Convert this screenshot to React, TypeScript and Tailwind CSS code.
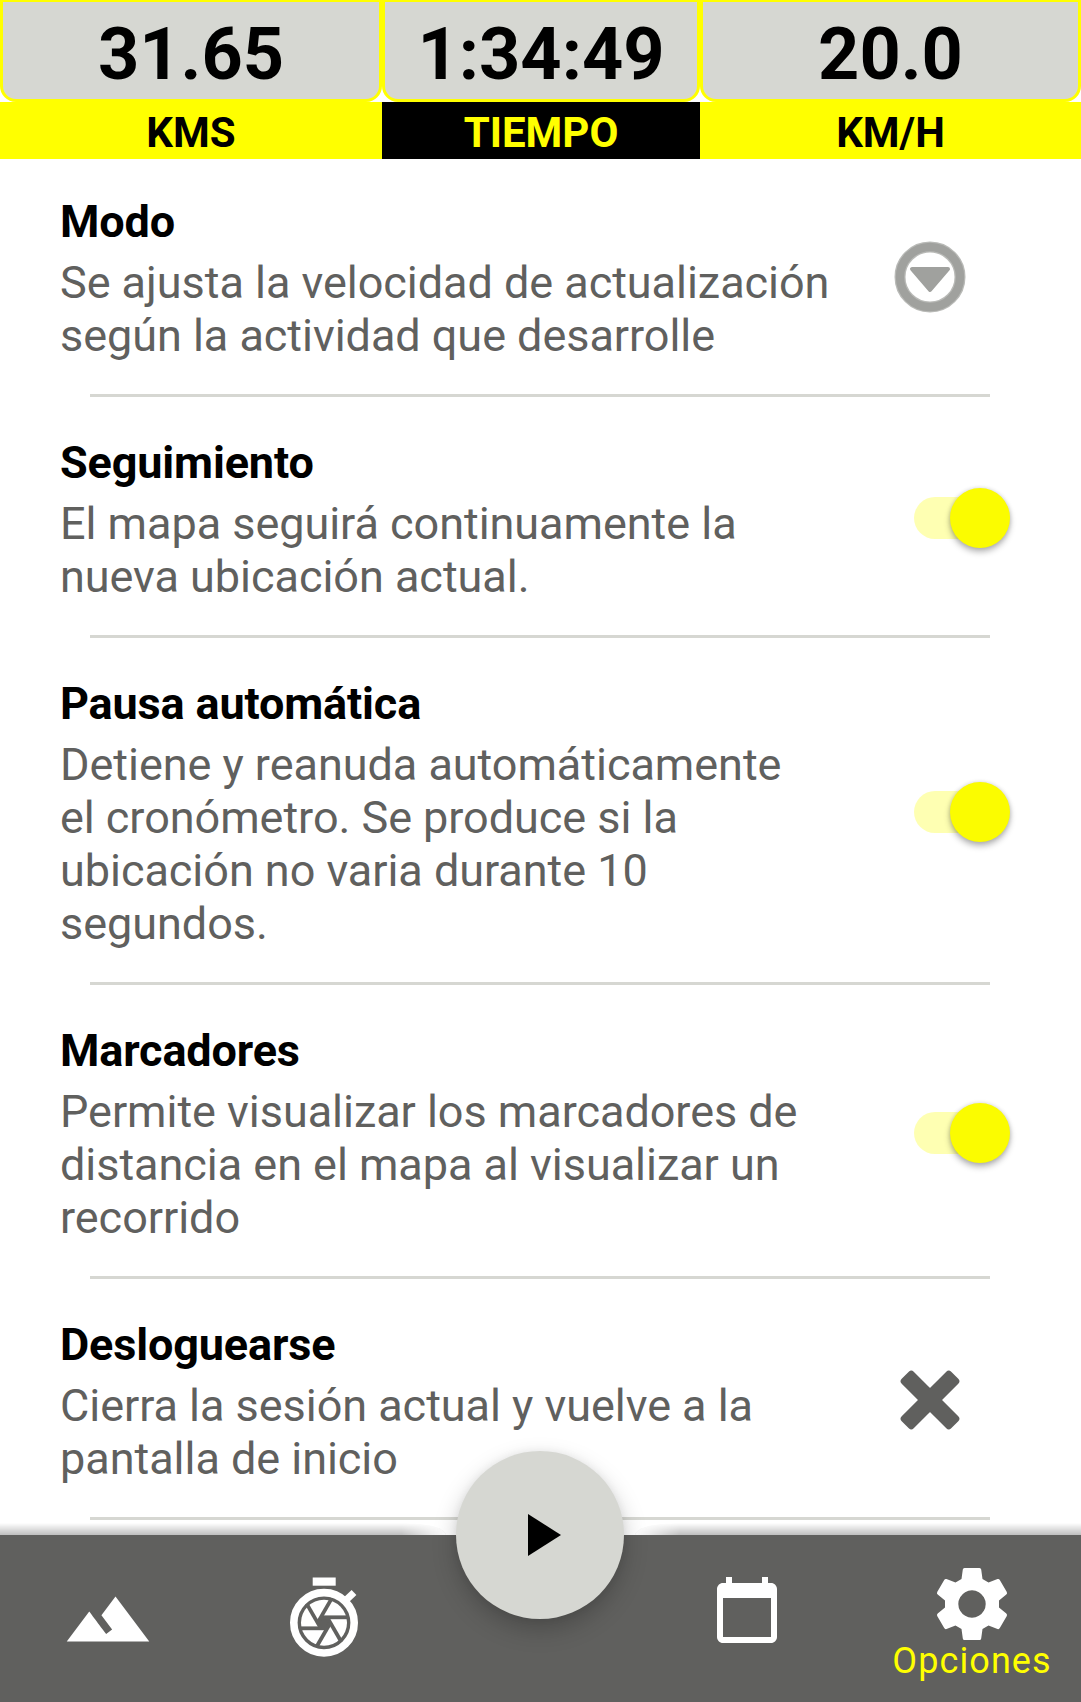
import React from "react";

function Switch() {
  return (
    <div className="relative -mt-[3px] ml-[54px] h-[60px] w-[96px]">
      <div className="absolute top-[9px] left-0 h-[42px] w-[84px] rounded-full bg-[#feffb2]" />
      <div className="absolute top-0 right-0 size-[60px] rounded-full bg-[#fbfc00] shadow-[0_4px_6px_rgba(0,0,0,0.28),0_0_4px_rgba(0,0,0,0.14)]" />
    </div>
  );
}

function Dropdown() {
  return (
    <svg className="-mt-[4px] ml-[34px] size-[72px]" viewBox="0 0 72 72">
      <circle cx="36" cy="36" r="30" fill="none" stroke="#b9bab7" strokeWidth="11" />
      <circle cx="36" cy="36" r="30" fill="none" stroke="#a0a19e" strokeWidth="8.4" />
      <path d="M18 28H54L36 49Z" fill="#a0a19e" stroke="#a0a19e" strokeWidth="4" strokeLinejoin="round" />
    </svg>
  );
}

function Cross() {
  return (
    <svg className="-mt-[3px] ml-[34px] size-[72px]" viewBox="0 0 72 72">
      <g fill="#60605e" transform="rotate(45 36 36)">
        <rect x="1" y="27.500" width="70" height="17" rx="3.500" />
        <rect x="27.500" y="1" width="17" height="70" rx="3.500" />
      </g>
    </svg>
  );
}

const items = [
  { title: "Modo", lines: ["Se ajusta la velocidad de actualización", "según la actividad que desarrolle"], control: <Dropdown /> },
  { title: "Seguimiento", lines: ["El mapa seguirá continuamente la", "nueva ubicación actual."], control: <Switch /> },
  { title: "Pausa automática", lines: ["Detiene y reanuda automáticamente", "el cronómetro. Se produce si la", "ubicación no varia durante 10", "segundos."], control: <Switch /> },
  { title: "Marcadores", lines: ["Permite visualizar los marcadores de", "distancia en el mapa al visualizar un", "recorrido"], control: <Switch /> },
  { title: "Desloguearse", lines: ["Cierra la sesión actual y vuelve a la", "pantalla de inicio"], control: <Cross /> },
];

const stats = [
  { value: "31.65", label: "KMS", style: "bg-[#ffff00] text-black" },
  { value: "1:34:49", label: "TIEMPO", style: "bg-black text-[#ffff00]" },
  { value: "20.0", label: "KM/H", style: "bg-[#ffff00] text-black" },
];

function StopwatchIcon() {
  return (
    <svg className="h-[90px] w-[90px]" viewBox="280 1570 90 90">
      <rect x="312.7" y="1577.5" width="23" height="8.2" fill="#fff" />
      <path d="M345 1601L354 1592.500" stroke="#fff" strokeWidth="7" />
      <circle cx="324" cy="1622.800" r="30.200" fill="none" stroke="#fff" strokeWidth="7.600" />
      <circle cx="324" cy="1622.800" r="23" fill="#fff" />
      <circle cx="324" cy="1622.800" r="5.500" fill="#60605e" />
      <g stroke="#60605e" strokeWidth="3.8">
        {[0, 60, 120, 180, 240, 300].map((a) => (
          <path key={a} d="M321 1617.300H349" transform={`rotate(${a} 324 1622.800)`} />
        ))}
      </g>
    </svg>
  );
}

export default function App() {
  return (
    <div className="relative flex h-[1702px] w-[1081px] flex-col overflow-hidden bg-white font-[Roboto,sans-serif]">
      <header className="grid shrink-0 grid-cols-[382px_318px_381px]">
        {stats.map((s) => (
          <div key={s.label} className="text-center font-bold">
            <div className="h-[102px] rounded-b-[16px] border-[3px] border-t-2 border-[#ffff00] bg-[#d6d7d2] text-[72px] leading-[105px] text-black">{s.value}</div>
            <div className={`h-[57px] text-[42px] leading-[61px] ${s.style}`}>{s.label}</div>
          </div>
        ))}
      </header>
      <main className="-mt-[3px] flex flex-col">
        {items.map((it) => (
          <section key={it.title} className="flex flex-col">
            <div className="flex items-center pt-[39px] pb-[32px] pl-[60px]">
              <div className="w-[800px] text-[45px] leading-[53px] whitespace-nowrap">
                <h2 className="mb-[8px] font-bold tracking-[-0.150px] text-black">{it.title}</h2>
                {it.lines.map((l) => (
                  <p key={l} className="tracking-[-0.040px] text-[#60605e]">{l}</p>
                ))}
              </div>
              {it.control}
            </div>
            <div className="ml-[90px] h-[3px] w-[900px] bg-[#d6d7d2]" />
          </section>
        ))}
      </main>
      <nav className="absolute inset-x-0 bottom-0 grid h-[167px] grid-cols-[216px_216px_217px_216px_216px] bg-[#60605e]">
        <div className="absolute -top-[12px] left-0 h-[12px] w-[446px] rounded-tr-[40px_12px] bg-linear-to-t from-black/25 to-transparent mask-r-from-90% mask-r-to-100%" />
        <div className="absolute -top-[12px] right-0 h-[12px] w-[446px] rounded-tl-[40px_12px] bg-linear-to-t from-black/25 to-transparent mask-l-from-90% mask-l-to-100%" />
        <div className="pt-[39px] pl-[63px]">
          <svg className="size-[90px]" viewBox="0 0 24 24" fill="#fff">
            <path d="M14 6l-3.75 5 2.85 3.800-1.600 1.200C9.810 13.750 7 10 7 10l-6 8h22L14 6z" />
          </svg>
        </div>
        <div className="pt-[35px] pl-[64px]"><StopwatchIcon /></div>
        <div />
        <div className="pt-[39px] pl-[62px]">
          <svg className="size-[72px]" viewBox="0 0 24 24" fill="#fff">
            <path d="M20 3h-1V1h-2v2H7V1H5v2H4c-1.100 0-2 .9-2 2v16c0 1.100.9 2 2 2h16c1.100 0 2-.9 2-2V5c0-1.100-.9-2-2-2zm0 18H4V8h16v13z" />
          </svg>
        </div>
        <div className="flex flex-col items-center pt-[25px] pr-[2px]">
          <svg className="h-[90px] w-[90px]" viewBox="927 1560 90 90">
            <path fill="#fff" fillRule="evenodd" d="M964.500 1568H979.500Q981 1568 981.200 1569.500L982.500 1579L988.500 1582.500L997.500 1579Q999 1578.500 999.800 1580L1006.800 1592Q1007.500 1593.500 1006.300 1594.500L999 1600.500V1607.500L1006.300 1613.500Q1007.500 1614.500 1006.800 1616L999.800 1628Q999 1629.500 997.500 1629L988.500 1625.500L982.500 1629L981.200 1638.500Q981 1640 979.500 1640H964.500Q963 1640 962.800 1638.500L961.500 1629L955.500 1625.500L946.500 1629Q945 1629.500 944.200 1628L937.200 1616Q936.500 1614.500 937.700 1613.500L945 1607.500V1600.500L937.700 1594.500Q936.500 1593.500 937.200 1592L944.200 1580Q945 1578.500 946.500 1579L955.500 1582.500L961.500 1579L962.800 1569.500Q963 1568 964.500 1568ZM972 1590.300a13.700 13.700 0 1 0 .01 0Z" />
          </svg>
          <span className="-mt-[10px] text-[36px] leading-[42px] tracking-[1.100px] text-[#ffff00]">Opciones</span>
        </div>
      </nav>
      <button className="absolute top-[1451px] left-[456px] flex size-[168px] items-center justify-center rounded-full bg-[#d6d7d2] shadow-[0_10px_24px_rgba(0,0,0,0.22),0_0_8px_rgba(0,0,0,0.06)]">
        <svg className="ml-[9px] h-[42px] w-[33px]" viewBox="0 0 33 42"><path d="M0 0L33 21L0 42Z" /></svg>
      </button>
    </div>
  );
}
